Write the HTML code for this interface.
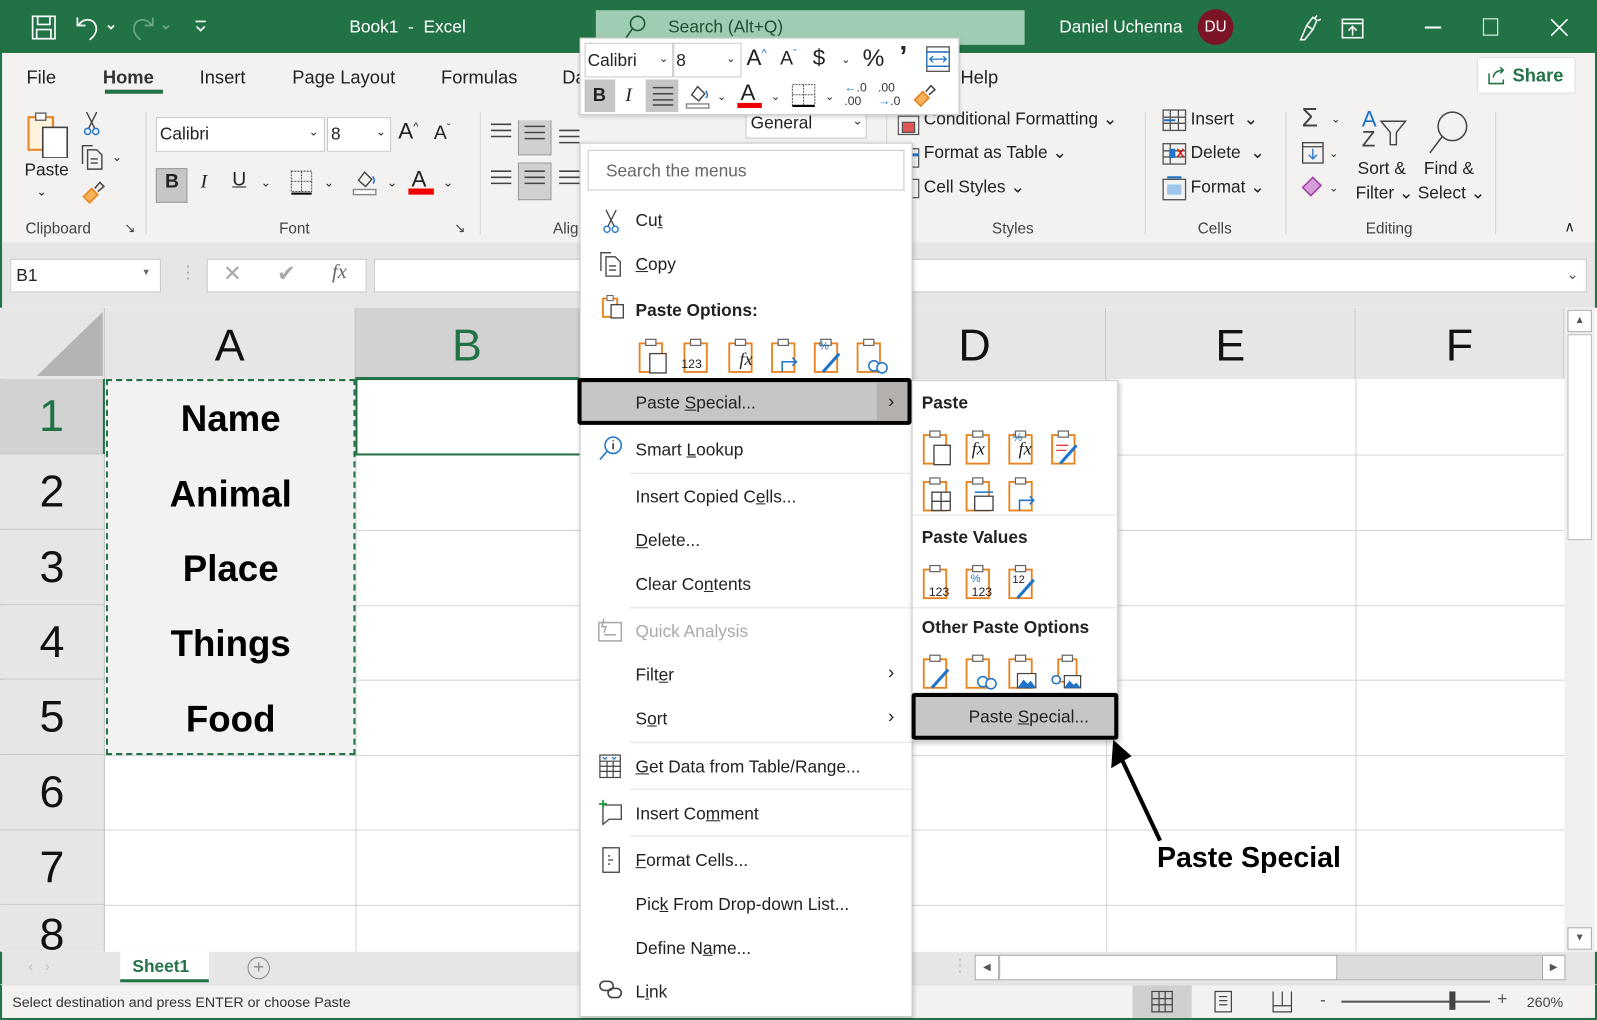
<!DOCTYPE html>
<html><head><meta charset="utf-8"><style>
*{margin:0;padding:0;box-sizing:border-box}
html,body{width:1597px;height:1020px;overflow:hidden;background:#fff}
#w{position:absolute;left:0;top:0;width:1568px;height:1001px;transform:scale(1.01850,1.01898);transform-origin:0 0;font-family:"Liberation Sans",sans-serif;color:#222}
.a{position:absolute}
.t{position:absolute;white-space:nowrap}
.tb{background:#217346}
.g{color:#444}
.rh{position:absolute;left:0;width:103px;background:#e6e6e6;border-bottom:1px solid #c6c6c6;border-right:1px solid #c6c6c6;font-size:44px;text-align:center;line-height:74px;color:#111}
.ch{position:absolute;top:302px;height:70px;background:#e6e6e6;border-right:1px solid #c6c6c6;font-size:44px;text-align:center;line-height:76px;color:#111}
.hl{position:absolute;left:103px;width:1433px;height:1px;background:#d4d4d4}
.vl{position:absolute;top:372px;width:1px;height:562px;background:#d4d4d4}
.cell{position:absolute;left:104px;width:245px;font-weight:bold;font-size:36px;text-align:center;color:#000}
.mi{position:absolute;left:624px;font-size:17px;color:#222;white-space:nowrap}
.sep{position:absolute;left:618px;width:276px;height:1px;background:#e1e1e1}
.u{text-decoration:underline}
.rl{position:absolute;top:216px;font-size:15px;color:#444;white-space:nowrap}
.vs{position:absolute;top:110px;width:1px;height:120px;background:#d4d4d4}
.rt{position:absolute;font-size:17px;color:#222;white-space:nowrap}
</style></head><body><div id="w">

<!-- title bar -->
<div class="a tb" style="left:0;top:0;width:1568px;height:52px"></div>
<svg class="a" style="left:30px;top:14px" width="26" height="26" viewBox="0 0 26 26" fill="none" stroke="#fff" stroke-width="1.6"><rect x="2" y="2" width="22" height="22"/><rect x="7" y="2" width="12" height="8"/><rect x="6" y="15" width="14" height="9"/></svg>
<svg class="a" style="left:72px;top:13px" width="48" height="28" viewBox="0 0 48 28" fill="none" stroke="#fff" stroke-width="1.7"><path d="M4 4v8h8M5 12c4-7 14-8 17 0c2 6-2 11-6 14"/><path d="M34 12l3 3 3-3"/></svg>
<svg class="a" style="left:128px;top:13px" width="48" height="28" viewBox="0 0 48 28" fill="none" stroke="#6aa882" stroke-width="1.7"><path d="M22 4v8h-8M21 12c-4-7-14-8-17 0c-2 6 2 11 6 14"/><path d="M32 12l3 3 3-3"/></svg>
<svg class="a" style="left:190px;top:18px" width="14" height="16" viewBox="0 0 14 16" fill="none" stroke="#fff" stroke-width="1.6"><path d="M2 3h10M3 8l4 4 4-4"/></svg>
<div class="t" style="left:343px;top:17px;font-size:17px;color:#fff">Book1&nbsp; - &nbsp;Excel</div>
<div class="a" style="left:585px;top:10px;width:421px;height:34px;background:#9fcdb3"></div>
<svg class="a" style="left:612px;top:14px" width="24" height="26" viewBox="0 0 24 26" fill="none" stroke="#1e5a38" stroke-width="1.6"><circle cx="14" cy="9" r="7"/><path d="M9 14L2 24"/></svg>
<div class="t" style="left:656px;top:17px;font-size:17px;color:#1e4d33">Search (Alt+Q)</div>
<div class="t" style="left:1040px;top:17px;font-size:17px;color:#fff">Daniel Uchenna</div>
<div class="a" style="left:1176px;top:9px;width:35px;height:35px;border-radius:50%;background:#7b1424;color:#fff;font-size:15px;text-align:center;line-height:35px">DU</div>
<svg class="a" style="left:1273px;top:13px" width="26" height="28" viewBox="0 0 26 28" fill="none" stroke="#fff" stroke-width="1.5"><path d="M4 26l6-14 6 4-8 10zM10 12l6-8 4 3-4 9M20 2l-2 3M24 6l-3 1"/></svg>
<svg class="a" style="left:1316px;top:17px" width="24" height="22" viewBox="0 0 24 22" fill="none" stroke="#fff" stroke-width="1.5"><rect x="2" y="2" width="20" height="18"/><path d="M2 6h20M12 18v-9M8 13l4-4 4 4"/></svg>
<div class="a" style="left:1399px;top:26px;width:16px;height:2px;background:#fff"></div>
<div class="a" style="left:1456px;top:18px;width:15px;height:17px;border:1.6px solid #fff"></div>
<svg class="a" style="left:1522px;top:18px" width="18" height="18" viewBox="0 0 18 18" stroke="#fff" stroke-width="1.6"><path d="M1 1l16 16M17 1L1 17"/></svg>

<!-- ribbon -->
<div class="a" style="left:0;top:52px;width:1568px;height:186px;background:#f3f2f1;border-left:2px solid #217346;border-right:2px solid #217346"></div>
<div class="rt" style="left:26px;top:66px;font-size:18px">File</div>
<div class="rt" style="left:101px;top:66px;font-size:18px;font-weight:bold;color:#333">Home</div>
<div class="a" style="left:103px;top:88px;width:57px;height:4px;background:#217346"></div>
<div class="rt" style="left:196px;top:66px;font-size:18px">Insert</div>
<div class="rt" style="left:287px;top:66px;font-size:18px">Page Layout</div>
<div class="rt" style="left:433px;top:66px;font-size:18px">Formulas</div>
<div class="rt" style="left:552px;top:66px;font-size:18px">Da</div>
<div class="rt" style="left:943px;top:66px;font-size:18px">Help</div>
<div class="a" style="left:1450px;top:56px;width:97px;height:36px;background:#fff;border:1px solid #ddd;border-radius:3px"></div>
<svg class="a" style="left:1460px;top:64px" width="20" height="20" viewBox="0 0 20 20" fill="none" stroke="#217346" stroke-width="1.5"><path d="M2 8v10h14v-4M6 12c1-5 5-7 10-7M13 2l3 3-3 3"/></svg>
<div class="rt" style="left:1485px;top:64px;font-size:18px;font-weight:bold;color:#217346">Share</div>

<!-- clipboard group -->
<svg class="a" style="left:26px;top:107px" width="44" height="48" viewBox="0 0 44 48" fill="none"><rect x="2" y="8" width="24" height="32" fill="#fff3dd" stroke="#e8821e" stroke-width="2"/><rect x="9" y="4" width="10" height="7" fill="#fff" stroke="#666" stroke-width="1.4"/><rect x="16" y="18" width="24" height="30" fill="#fff" stroke="#444" stroke-width="1.6"/></svg>
<div class="rt" style="left:24px;top:157px">Paste</div>
<div class="rt" style="left:36px;top:181px;font-size:12px">&#x2304;</div>
<svg class="a" style="left:80px;top:108px" width="20" height="26" viewBox="0 0 20 26" fill="none" stroke="#444" stroke-width="1.4"><path d="M5 2l8 16M15 2L7 18"/><circle cx="6" cy="21" r="3" stroke="#1f74c9"/><circle cx="14" cy="21" r="3" stroke="#1f74c9"/></svg>
<svg class="a" style="left:78px;top:141px" width="26" height="26" viewBox="0 0 26 26" fill="none" stroke="#444" stroke-width="1.4"><path d="M3 20V2h10"/><path d="M8 6h9l5 5v14H8z"/><path d="M11 15h7M11 19h7"/></svg>
<div class="rt" style="left:110px;top:147px;font-size:12px">&#x2304;</div>
<svg class="a" style="left:78px;top:175px" width="28" height="28" viewBox="0 0 28 28" fill="none"><path d="M4 18l8-8 6 6-8 8z" fill="#f6b35a" stroke="#e8821e" stroke-width="1.6"/><path d="M15 10l5-6 4 4-6 5" stroke="#444" stroke-width="1.5"/></svg>
<div class="rl" style="left:25px">Clipboard</div>
<div class="rl" style="left:122px;font-size:13px">&#x2198;</div>
<div class="vs" style="left:143px"></div>

<!-- font group -->
<div class="a" style="left:153px;top:115px;width:166px;height:34px;background:#fff;border:1px solid #c8c8c8"></div>
<div class="rt" style="left:157px;top:122px">Calibri</div>
<div class="rt" style="left:303px;top:122px;font-size:12px">&#x2304;</div>
<div class="a" style="left:321px;top:115px;width:63px;height:34px;background:#fff;border:1px solid #c8c8c8"></div>
<div class="rt" style="left:325px;top:122px">8</div>
<div class="rt" style="left:369px;top:122px;font-size:12px">&#x2304;</div>
<div class="rt" style="left:391px;top:116px;font-size:22px">A<sup style="font-size:11px">^</sup></div>
<div class="rt" style="left:426px;top:120px;font-size:19px">A<sup style="font-size:11px">&#x2c7;</sup></div>
<div class="a" style="left:153px;top:165px;width:31px;height:34px;background:#c8c6c4;border:1px solid #999"></div>
<div class="rt" style="left:162px;top:168px;font-size:19px;font-weight:bold">B</div>
<div class="rt" style="left:197px;top:168px;font-size:19px;font-style:italic;font-family:'Liberation Serif',serif">I</div>
<div class="rt" style="left:228px;top:166px;font-size:19px;text-decoration:underline">U</div>
<div class="rt" style="left:256px;top:172px;font-size:12px">&#x2304;</div>
<svg class="a" style="left:284px;top:166px" width="24" height="26" viewBox="0 0 24 26" fill="none" stroke="#555" stroke-width="1" stroke-dasharray="2 1"><rect x="2" y="2" width="20" height="20"/><path d="M12 2v20M2 12h20"/><path d="M2 24h20" stroke="#000" stroke-width="2" stroke-dasharray="0"/></svg>
<div class="rt" style="left:318px;top:172px;font-size:12px">&#x2304;</div>
<svg class="a" style="left:346px;top:163px" width="26" height="30" viewBox="0 0 26 30" fill="none" stroke="#444" stroke-width="1.4"><path d="M6 14l6-8 7 7-6 7z"/><path d="M20 10c2 3 2 6 0 7" stroke="#1f74c9"/><rect x="1" y="23" width="22" height="5" fill="#fff" stroke="#888"/></svg>
<div class="rt" style="left:380px;top:172px;font-size:12px">&#x2304;</div>
<div class="rt" style="left:404px;top:163px;font-size:22px">A</div>
<div class="a" style="left:401px;top:185px;width:25px;height:6px;background:#e00"></div>
<div class="rt" style="left:435px;top:172px;font-size:12px">&#x2304;</div>
<div class="rl" style="left:274px">Font</div>
<div class="rl" style="left:446px;font-size:13px">&#x2198;</div>
<div class="vs" style="left:471px"></div>

<!-- alignment partial -->
<svg class="a" style="left:479px;top:118px" width="90" height="80" viewBox="0 0 90 80" fill="none" stroke="#444" stroke-width="1.5"><path d="M3 4h20M3 10h20M3 16h20"/><rect x="30" y="-2" width="32" height="36" fill="#d2d0ce" stroke="#999" stroke-width="1"/><path d="M36 6h20M36 12h20M36 18h20"/><path d="M70 10h20M70 16h20M70 22h20"/><path d="M3 50h20M3 56h20M3 62h20"/><rect x="30" y="42" width="32" height="36" fill="#d2d0ce" stroke="#999" stroke-width="1"/><path d="M36 50h20M36 56h20M36 62h20"/><path d="M70 50h20M70 56h20M70 62h20"/></svg>
<div class="rl" style="left:543px">Alig</div>

<!-- styles / cells / editing -->
<div class="a" style="left:732px;top:108px;width:119px;height:28px;background:#fff;border:1px solid #c8c8c8"></div>
<div class="rt" style="left:737px;top:111px">General</div>
<div class="rt" style="left:837px;top:111px;font-size:12px">&#x2304;</div>
<div class="vs" style="left:870px"></div>
<svg class="a" style="left:880px;top:108px" width="24" height="90" viewBox="0 0 24 90" fill="none" stroke="#555" stroke-width="1.2"><rect x="2" y="6" width="20" height="18"/><rect x="6" y="12" width="12" height="10" fill="#e05555"/><rect x="2" y="38" width="20" height="18"/><path d="M2 44h20" stroke="#1f74c9" stroke-width="3"/><rect x="2" y="68" width="20" height="18"/></svg>
<div class="rt" style="left:907px;top:107px">Conditional Formatting &#x2304;</div>
<div class="rt" style="left:907px;top:140px">Format as Table &#x2304;</div>
<div class="rt" style="left:907px;top:174px">Cell Styles &#x2304;</div>
<div class="rl" style="left:974px">Styles</div>
<div class="vs" style="left:1124px"></div>
<svg class="a" style="left:1140px;top:106px" width="26" height="92" viewBox="0 0 26 92" fill="none" stroke="#555" stroke-width="1.3"><rect x="2" y="2" width="22" height="20"/><path d="M2 9h22M2 15h22M9 2v20M17 2v20"/><path d="M14 12H3" stroke="#1f74c9" stroke-width="2"/><rect x="2" y="35" width="22" height="20"/><path d="M2 42h22M2 48h22M9 35v20"/><rect x="8" y="40" width="6" height="9" fill="#1f74c9" stroke="none"/><path d="M16 40l6 8M22 40l-6 8" stroke="#e00"/><rect x="2" y="70" width="22" height="20"/><rect x="6" y="75" width="14" height="10" fill="#9cc6ec" stroke="none"/><path d="M6 68h14" stroke="#1f74c9" stroke-width="2"/></svg>
<div class="rt" style="left:1169px;top:107px">Insert &nbsp;&#x2304;</div>
<div class="rt" style="left:1169px;top:140px">Delete &nbsp;&#x2304;</div>
<div class="rt" style="left:1169px;top:174px">Format &#x2304;</div>
<div class="rl" style="left:1176px">Cells</div>
<div class="vs" style="left:1262px"></div>
<div class="rt" style="left:1278px;top:100px;font-size:26px;color:#444">&Sigma;</div>
<div class="rt" style="left:1307px;top:110px;font-size:11px">&#x2304;</div>
<svg class="a" style="left:1277px;top:138px" width="24" height="24" viewBox="0 0 24 24" fill="none" stroke="#444" stroke-width="1.3"><rect x="2" y="2" width="20" height="20"/><path d="M2 6h20" /><path d="M12 8v10M8 14l4 4 4-4" stroke="#1f74c9"/></svg>
<div class="rt" style="left:1305px;top:144px;font-size:11px">&#x2304;</div>
<svg class="a" style="left:1277px;top:170px" width="24" height="24" viewBox="0 0 24 24" fill="none"><path d="M2 14l10-10 8 8-10 10z" fill="#d69bd9" stroke="#9c3fa3" stroke-width="1.5"/></svg>
<div class="rt" style="left:1305px;top:178px;font-size:11px">&#x2304;</div>
<div class="rt" style="left:1337px;top:104px;font-size:22px;color:#1f74c9">A</div>
<div class="rt" style="left:1337px;top:124px;font-size:22px;color:#444">Z</div>
<svg class="a" style="left:1354px;top:116px" width="30" height="30" viewBox="0 0 30 30" fill="none" stroke="#444" stroke-width="1.4"><path d="M2 3h24l-9 11v12h-6V14z"/></svg>
<div class="rt" style="left:1333px;top:156px">Sort &amp;</div>
<div class="rt" style="left:1331px;top:180px">Filter &#x2304;</div>
<svg class="a" style="left:1400px;top:104px" width="48" height="48" viewBox="0 0 48 48" fill="none" stroke="#444" stroke-width="1.5"><circle cx="26" cy="20" r="14"/><path d="M16 30L4 46"/></svg>
<div class="rt" style="left:1398px;top:156px">Find &amp;</div>
<div class="rt" style="left:1392px;top:180px">Select &#x2304;</div>
<div class="rl" style="left:1341px">Editing</div>
<div class="vs" style="left:1468px"></div>
<div class="rt" style="left:1536px;top:214px;font-size:14px">&#x2227;</div>

<!-- formula bar area -->
<div class="a" style="left:0;top:238px;width:1568px;height:64px;background:#e6e6e6;border-left:2px solid #217346;border-right:2px solid #217346"></div>
<div class="a" style="left:10px;top:254px;width:148px;height:33px;background:#fff;border:1px solid #c8c8c8"></div>
<div class="rt" style="left:16px;top:261px">B1</div>
<div class="rt" style="left:139px;top:262px;font-size:9px;color:#666">&#9660;</div>
<div class="rt" style="left:176px;top:258px;color:#aaa">&#8942;</div>
<div class="a" style="left:203px;top:254px;width:157px;height:33px;background:#fff;border:1px solid #c8c8c8"></div>
<div class="rt" style="left:219px;top:256px;font-size:22px;color:#aaa">&#x2715;</div>
<div class="rt" style="left:272px;top:256px;font-size:22px;color:#aaa">&#x2714;</div>
<div class="rt" style="left:326px;top:256px;font-size:20px;color:#666;font-style:italic;font-family:'Liberation Serif',serif">fx</div>
<div class="a" style="left:367px;top:254px;width:1191px;height:33px;background:#fff;border:1px solid #c8c8c8"></div>
<div class="rt" style="left:1538px;top:261px;font-size:14px;color:#555">&#x2304;</div>

<!-- grid -->
<div class="a" style="left:0;top:302px;width:1536px;height:632px;background:#fff;border-left:2px solid #217346"></div>
<div class="a" style="left:0;top:302px;width:103px;height:70px;background:#e6e6e6;border-right:1px solid #c6c6c6"></div>
<svg class="a" style="left:36px;top:306px" width="65" height="63" viewBox="0 0 65 63"><path d="M65 0V63H0z" fill="#b4b4b4"/></svg>
<div class="ch" style="left:103px;width:246px">A</div>
<div class="ch" style="left:349px;width:220px;background:#d2d2d2;color:#217346;border-bottom:2px solid #217346">B</div>
<div class="ch" style="left:895px;width:191px;background:#e6e6e6"><span style="position:absolute;left:46px">D</span></div>
<div class="ch" style="left:1086px;width:245px">E</div>
<div class="ch" style="left:1331px;width:205px">F</div>

<div class="rh" style="top:372px;height:74px;background:#d2d2d2;color:#217346;border-right:2px solid #217346">1</div>
<div class="rh" style="top:446px;height:74px">2</div>
<div class="rh" style="top:520px;height:74px">3</div>
<div class="rh" style="top:594px;height:73px">4</div>
<div class="rh" style="top:667px;height:74px">5</div>
<div class="rh" style="top:741px;height:74px">6</div>
<div class="rh" style="top:815px;height:73px">7</div>
<div class="rh" style="top:888px;height:46px;line-height:60px;overflow:hidden;border-bottom:none">8</div>

<div class="hl" style="top:446px"></div><div class="hl" style="top:520px"></div><div class="hl" style="top:594px"></div><div class="hl" style="top:667px"></div><div class="hl" style="top:741px"></div><div class="hl" style="top:814px"></div><div class="hl" style="top:888px"></div>
<div class="vl" style="left:349px"></div><div class="vl" style="left:1086px"></div><div class="vl" style="left:1331px"></div>
<div class="a" style="left:104px;top:372px;width:245px;height:369px;background:#f2f2f2;border:2px dashed #217346"></div>
<div class="cell" style="top:390px">Name</div>
<div class="cell" style="top:464px">Animal</div>
<div class="cell" style="top:537px">Place</div>
<div class="cell" style="top:611px">Things</div>
<div class="cell" style="top:685px">Food</div>
<div class="a" style="left:349px;top:371px;width:222px;height:76px;border:2px solid #217346;border-right:none"></div>

<!-- scrollbar -->
<div class="a" style="left:1536px;top:302px;width:30px;height:632px;background:#f0f0f0"></div>
<div class="a" style="left:1539px;top:304px;width:24px;height:22px;background:#fff;border:1px solid #aaa;font-size:10px;text-align:center;line-height:20px;color:#555">&#9650;</div>
<div class="a" style="left:1539px;top:328px;width:24px;height:202px;background:#fff;border:1px solid #bbb"></div>
<div class="a" style="left:1539px;top:910px;width:24px;height:22px;background:#fff;border:1px solid #aaa;font-size:10px;text-align:center;line-height:20px;color:#555">&#9660;</div>

<!-- sheet tabs -->
<div class="a" style="left:0;top:934px;width:1568px;height:32px;background:#e6e6e6;border-left:2px solid #217346;border-right:2px solid #217346"></div>
<div class="rt" style="left:28px;top:940px;color:#bbb;font-size:14px">&#x2039; &nbsp; &#x203A;</div>
<div class="a" style="left:118px;top:934px;width:87px;height:30px;background:#fff;border-bottom:3px solid #217346"></div>
<div class="rt" style="left:130px;top:939px;font-weight:bold;color:#217346">Sheet1</div>
<div class="a" style="left:243px;top:939px;width:22px;height:22px;border:1.5px solid #888;border-radius:50%;text-align:center;line-height:18px;color:#888;font-size:18px">+</div>
<div class="rt" style="left:934px;top:938px;color:#bbb">&#8942;</div>
<div class="a" style="left:957px;top:937px;width:580px;height:25px;background:#dcdcdc;border:1px solid #bbb"></div>
<div class="a" style="left:957px;top:937px;width:24px;height:25px;background:#fff;border:1px solid #aaa;font-size:10px;text-align:center;line-height:23px;color:#555">&#9664;</div>
<div class="a" style="left:981px;top:937px;width:332px;height:25px;background:#fff;border:1px solid #aaa"></div>
<div class="a" style="left:1514px;top:937px;width:23px;height:25px;background:#fff;border:1px solid #aaa;font-size:10px;text-align:center;line-height:23px;color:#555">&#9654;</div>

<!-- status bar -->
<div class="a" style="left:0;top:966px;width:1568px;height:35px;background:#f3f2f1;border:2px solid #217346;border-top:1px solid #ddd"></div>
<div class="rt" style="left:12px;top:975px;font-size:14px;color:#333">Select destination and press ENTER or choose Paste</div>
<div class="a" style="left:1112px;top:967px;width:58px;height:32px;background:#d2d0ce"></div>
<svg class="a" style="left:1130px;top:972px" width="22" height="22" viewBox="0 0 22 22" fill="none" stroke="#444" stroke-width="1.2"><rect x="1" y="1" width="20" height="20"/><path d="M1 8h20M1 14h20M8 1v20M14 1v20"/></svg>
<svg class="a" style="left:1190px;top:972px" width="22" height="22" viewBox="0 0 22 22" fill="none" stroke="#444" stroke-width="1.2"><rect x="3" y="1" width="16" height="20"/><path d="M7 6h8M7 10h8M7 14h8"/></svg>
<svg class="a" style="left:1248px;top:972px" width="22" height="22" viewBox="0 0 22 22" fill="none" stroke="#444" stroke-width="1.2"><path d="M2 1v20h18V1M11 1v14M2 15h18"/></svg>
<div class="rt" style="left:1296px;top:972px;color:#555">-</div>
<div class="a" style="left:1317px;top:982px;width:146px;height:2px;background:#555"></div>
<div class="a" style="left:1423px;top:973px;width:6px;height:18px;background:#444"></div>
<div class="rt" style="left:1470px;top:971px;color:#555">+</div>
<div class="rt" style="left:1499px;top:975px;font-size:14px;color:#444">260%</div>

<!-- mini toolbar -->
<div class="a" style="left:569px;top:37px;width:373px;height:76px;background:#fff;border:1px solid #c8c8c8;box-shadow:0 2px 4px rgba(0,0,0,.2)"></div>
<div class="a" style="left:574px;top:42px;width:87px;height:34px;border:1px solid #c8c8c8"></div>
<div class="rt" style="left:577px;top:50px">Calibri</div>
<div class="rt" style="left:647px;top:51px;font-size:11px">&#x2304;</div>
<div class="a" style="left:661px;top:42px;width:67px;height:34px;border:1px solid #c8c8c8"></div>
<div class="rt" style="left:664px;top:50px">8</div>
<div class="rt" style="left:713px;top:51px;font-size:11px">&#x2304;</div>
<div class="rt" style="left:733px;top:44px;font-size:22px">A<sup style="font-size:11px;color:#1f74c9">^</sup></div>
<div class="rt" style="left:766px;top:47px;font-size:19px">A<sup style="font-size:11px;color:#1f74c9">&#x2c7;</sup></div>
<div class="rt" style="left:798px;top:44px;font-size:22px">$</div>
<div class="rt" style="left:826px;top:52px;font-size:11px">&#x2304;</div>
<div class="rt" style="left:847px;top:44px;font-size:24px">%</div>
<div class="rt" style="left:883px;top:40px;font-size:28px;font-weight:bold">&#x2019;</div>
<svg class="a" style="left:909px;top:45px" width="24" height="26" viewBox="0 0 24 26" fill="none" stroke="#555" stroke-width="1.3"><rect x="1" y="1" width="22" height="24"/><path d="M1 6h22M1 20h22"/><path d="M4 13h16M7 10l-3 3 3 3M17 10l3 3-3 3" stroke="#1f74c9"/><rect x="1" y="6" width="22" height="14" stroke="#1f74c9"/></svg>
<div class="a" style="left:574px;top:78px;width:30px;height:32px;background:#c8c6c4"></div>
<div class="rt" style="left:582px;top:83px;font-size:18px;font-weight:bold">B</div>
<div class="rt" style="left:614px;top:83px;font-size:19px;font-style:italic;font-family:'Liberation Serif',serif">I</div>
<div class="a" style="left:634px;top:78px;width:32px;height:32px;background:#c8c6c4"></div>
<svg class="a" style="left:640px;top:84px" width="22" height="20" viewBox="0 0 22 20" stroke="#444" stroke-width="1.5"><path d="M1 2h20M1 8h20M1 14h20M1 19h20"/></svg>
<svg class="a" style="left:673px;top:79px" width="26" height="30" viewBox="0 0 26 30" fill="none" stroke="#444" stroke-width="1.4"><path d="M6 14l6-8 7 7-6 7z"/><path d="M20 10c2 3 2 6 0 7" stroke="#1f74c9"/><rect x="1" y="23" width="22" height="4" stroke="#888"/></svg>
<div class="rt" style="left:704px;top:88px;font-size:11px">&#x2304;</div>
<div class="rt" style="left:727px;top:78px;font-size:22px">A</div>
<div class="a" style="left:724px;top:101px;width:24px;height:5px;background:#e00"></div>
<div class="rt" style="left:757px;top:88px;font-size:11px">&#x2304;</div>
<svg class="a" style="left:777px;top:82px" width="24" height="24" viewBox="0 0 24 24" fill="none" stroke="#555" stroke-width="1" stroke-dasharray="2 1"><rect x="1" y="1" width="22" height="20"/><path d="M12 1v20M1 11h22"/><path d="M1 22h22" stroke="#000" stroke-width="2" stroke-dasharray="0"/></svg>
<div class="rt" style="left:810px;top:88px;font-size:11px">&#x2304;</div>
<div class="rt" style="left:829px;top:80px;font-size:12px;line-height:13px;color:#1f74c9">&larr;<span style="color:#333">.0</span><br><span style="color:#333">.00</span></div>
<div class="rt" style="left:862px;top:80px;font-size:12px;line-height:13px;color:#333">.00<br><span style="color:#1f74c9">&rarr;</span>.0</div>
<svg class="a" style="left:894px;top:80px" width="28" height="28" viewBox="0 0 28 28" fill="none"><path d="M4 18l8-8 6 6-8 8z" fill="#f6b35a" stroke="#e8821e" stroke-width="1.6"/><path d="M15 10l5-6 4 4-6 5" stroke="#444" stroke-width="1.5"/></svg>

<!-- context menu -->
<div class="a" style="left:569px;top:140px;width:327px;height:858px;background:#fff;border:1px solid #c8c8c8;box-shadow:1px 2px 5px rgba(0,0,0,.25)"></div>
<div class="a" style="left:577px;top:147px;width:311px;height:40px;border:1px solid #c8c8c8"></div>
<div class="rt" style="left:595px;top:158px;color:#666">Search the menus</div>
<svg class="a" style="left:590px;top:204px" width="20" height="26" viewBox="0 0 20 26" fill="none" stroke="#444" stroke-width="1.3"><path d="M5 2l8 16M15 2L7 18"/><circle cx="6" cy="21" r="3" stroke="#1f74c9"/><circle cx="14" cy="21" r="3" stroke="#1f74c9"/></svg>
<div class="mi" style="top:207px">Cu<span class="u">t</span></div>
<svg class="a" style="left:587px;top:246px" width="26" height="26" viewBox="0 0 26 26" fill="none" stroke="#444" stroke-width="1.3"><path d="M3 20V2h10"/><path d="M8 6h9l5 5v14H8z"/><path d="M11 15h7M11 19h7"/></svg>
<div class="mi" style="top:250px"><span class="u">C</span>opy</div>
<svg class="a" style="left:590px;top:289px" width="24" height="24" viewBox="0 0 24 24" fill="none"><rect x="2" y="4" width="14" height="18" stroke="#e8821e" stroke-width="1.8"/><rect x="6" y="1" width="6" height="5" fill="#fff" stroke="#666"/><rect x="10" y="10" width="12" height="13" fill="#fff" stroke="#444" stroke-width="1.3"/></svg>
<div class="mi" style="top:295px;font-weight:bold">Paste Options:</div>
<!-- paste option icons -->
<svg class="a" style="left:626px;top:331px" width="250" height="36" viewBox="0 0 250 36" fill="none" stroke-width="1.8">
<g><rect x="2" y="6" width="22" height="28" stroke="#e8821e"/><rect x="8" y="2" width="10" height="6" fill="#fff" stroke="#666" stroke-width="1.2"/></g>
<rect x="12" y="16" width="16" height="19" fill="#fff" stroke="#444" stroke-width="1.3"/>
<g transform="translate(44 0)"><rect x="2" y="6" width="22" height="28" stroke="#e8821e"/><rect x="8" y="2" width="10" height="6" fill="#fff" stroke="#666" stroke-width="1.2"/></g>
<g transform="translate(88 0)"><rect x="2" y="6" width="22" height="28" stroke="#e8821e"/><rect x="8" y="2" width="10" height="6" fill="#fff" stroke="#666" stroke-width="1.2"/></g>
<g transform="translate(130 0)"><rect x="2" y="6" width="22" height="28" stroke="#e8821e"/><rect x="8" y="2" width="10" height="6" fill="#fff" stroke="#666" stroke-width="1.2"/><path d="M12 34v-10h14M22 20l4 4-4 4" stroke="#1f74c9" stroke-width="1.5"/></g>
<g transform="translate(172 0)"><rect x="2" y="6" width="22" height="28" stroke="#e8821e"/><rect x="8" y="2" width="10" height="6" fill="#fff" stroke="#666" stroke-width="1.2"/><path d="M10 34l16-18" stroke="#1f74c9" stroke-width="3"/></g>
<g transform="translate(214 0)"><rect x="2" y="6" width="22" height="28" stroke="#e8821e"/><rect x="8" y="2" width="10" height="6" fill="#fff" stroke="#666" stroke-width="1.2"/><circle cx="18" cy="28" r="5" fill="#fff" stroke="#1f74c9" stroke-width="1.5"/><circle cx="26" cy="30" r="5" fill="#fff" stroke="#1f74c9" stroke-width="1.5"/></g>
</svg>
<div class="rt" style="left:669px;top:350px;font-size:12px">123</div>
<div class="rt" style="left:726px;top:342px;font-size:18px;font-style:italic;font-family:'Liberation Serif',serif">fx</div>
<div class="rt" style="left:804px;top:334px;font-size:11px;color:#1f74c9">%</div>

<div class="a" style="left:567px;top:371px;width:328px;height:46px;border:4px solid #000;border-radius:3px;background:#c8c6c4"></div>
<div class="a" style="left:861px;top:375px;width:30px;height:38px;background:#b3b0ad"></div>
<div class="mi" style="top:386px">Paste <span class="u">S</span>pecial...</div>
<div class="rt" style="left:872px;top:384px;font-size:18px">&#x203A;</div>
<svg class="a" style="left:587px;top:427px" width="26" height="28" viewBox="0 0 26 28" fill="none" stroke="#1f74c9" stroke-width="1.5"><circle cx="15" cy="10" r="8"/><path d="M9 16L2 24"/><path d="M15 8v6M15 5v1" stroke="#333"/></svg>
<div class="mi" style="top:432px">Smart <span class="u">L</span>ookup</div>
<div class="sep" style="top:464px"></div>
<div class="mi" style="top:478px">Insert Copied C<span class="u">e</span>lls...</div>
<div class="mi" style="top:521px"><span class="u">D</span>elete...</div>
<div class="mi" style="top:564px">Clear Co<span class="u">n</span>tents</div>
<div class="sep" style="top:596px"></div>
<svg class="a" style="left:587px;top:605px" width="26" height="26" viewBox="0 0 26 26" fill="none" stroke="#aaa" stroke-width="1.5"><rect x="1" y="6" width="22" height="18"/><path d="M6 18h12M6 2l-2 8h4l-2 6"/></svg>
<div class="mi" style="top:610px;color:#aaa">Quick Analysis</div>
<div class="mi" style="top:653px">Filt<span class="u">e</span>r</div>
<div class="rt" style="left:872px;top:650px;font-size:18px">&#x203A;</div>
<div class="mi" style="top:696px">S<span class="u">o</span>rt</div>
<div class="rt" style="left:872px;top:693px;font-size:18px">&#x203A;</div>
<div class="sep" style="top:728px"></div>
<svg class="a" style="left:588px;top:740px" width="22" height="24" viewBox="0 0 22 24" fill="none" stroke="#444" stroke-width="1.2"><rect x="1" y="1" width="20" height="22"/><path d="M1 7h20M1 12h20M1 17h20M8 7v16M14 7v16"/><path d="M4 3l2 2 2-2M13 3l2 2 2-2" stroke="#1f74c9"/></svg>
<div class="mi" style="top:743px"><span class="u">G</span>et Data from Table/Range...</div>
<div class="sep" style="top:774px"></div>
<svg class="a" style="left:588px;top:784px" width="24" height="26" viewBox="0 0 24 26" fill="none" stroke="#444" stroke-width="1.3"><path d="M4 6h18v14H10l-6 5z"/><path d="M4 1v8M0 5h8" stroke="#2e9a47" stroke-width="1.8"/></svg>
<div class="mi" style="top:789px">Insert Co<span class="u">m</span>ment</div>
<div class="sep" style="top:820px"></div>
<svg class="a" style="left:590px;top:831px" width="20" height="26" viewBox="0 0 20 26" fill="none" stroke="#444" stroke-width="1.3"><rect x="2" y="1" width="16" height="24"/><path d="M7 9h2M7 13h5M7 17h2"/></svg>
<div class="mi" style="top:835px"><span class="u">F</span>ormat Cells...</div>
<div class="mi" style="top:878px">Pic<span class="u">k</span> From Drop-down List...</div>
<div class="mi" style="top:921px">Define N<span class="u">a</span>me...</div>
<svg class="a" style="left:587px;top:960px" width="26" height="22" viewBox="0 0 26 22" fill="none" stroke="#444" stroke-width="1.6"><rect x="2" y="3" width="13" height="9" rx="4.5"/><rect x="10" y="10" width="13" height="9" rx="4.5"/></svg>
<div class="mi" style="top:964px">L<span class="u">i</span>nk</div>

<!-- submenu -->
<div class="a" style="left:895px;top:373px;width:203px;height:354px;background:#fff;border:1px solid #c8c8c8;box-shadow:1px 2px 5px rgba(0,0,0,.25)"></div>
<div class="rt" style="left:905px;top:386px;font-weight:bold">Paste</div>
<svg class="a" style="left:905px;top:421px" width="170" height="82" viewBox="0 0 170 82" fill="none" stroke-width="1.8">
<g><rect x="2" y="6" width="22" height="28" stroke="#e8821e"/><rect x="8" y="2" width="10" height="6" fill="#fff" stroke="#666" stroke-width="1.2"/><rect x="12" y="16" width="16" height="19" fill="#fff" stroke="#444" stroke-width="1.3"/></g>
<g transform="translate(42 0)"><rect x="2" y="6" width="22" height="28" stroke="#e8821e"/><rect x="8" y="2" width="10" height="6" fill="#fff" stroke="#666" stroke-width="1.2"/></g>
<g transform="translate(84 0)"><rect x="2" y="6" width="22" height="28" stroke="#e8821e"/><rect x="8" y="2" width="10" height="6" fill="#fff" stroke="#666" stroke-width="1.2"/></g>
<g transform="translate(126 0)"><rect x="2" y="6" width="22" height="28" stroke="#e8821e"/><rect x="8" y="2" width="10" height="6" fill="#fff" stroke="#666" stroke-width="1.2"/><path d="M6 16h12M6 21h10" stroke="#e04040" stroke-width="1.3"/><path d="M10 34l16-18" stroke="#1f74c9" stroke-width="3"/></g>
<g transform="translate(0 46)"><rect x="2" y="6" width="22" height="28" stroke="#e8821e"/><rect x="8" y="2" width="10" height="6" fill="#fff" stroke="#666" stroke-width="1.2"/><rect x="10" y="16" width="18" height="18" fill="#fff" stroke="#444" stroke-width="1.3"/><path d="M19 16v18M10 25h18" stroke="#444" stroke-width="1.3"/></g>
<g transform="translate(42 46)"><rect x="2" y="6" width="22" height="28" stroke="#e8821e"/><rect x="8" y="2" width="10" height="6" fill="#fff" stroke="#666" stroke-width="1.2"/><rect x="10" y="20" width="18" height="14" fill="#fff" stroke="#444" stroke-width="1.3"/><path d="M10 16h18" stroke="#1f74c9" stroke-width="1.5"/></g>
<g transform="translate(84 46)"><rect x="2" y="6" width="22" height="28" stroke="#e8821e"/><rect x="8" y="2" width="10" height="6" fill="#fff" stroke="#666" stroke-width="1.2"/><path d="M12 34v-10h14M22 20l4 4-4 4" stroke="#1f74c9" stroke-width="1.5"/></g>
</svg>
<div class="rt" style="left:954px;top:430px;font-size:18px;font-style:italic;font-family:'Liberation Serif',serif">fx</div>
<div class="rt" style="left:994px;top:424px;font-size:11px;color:#1f74c9">%</div>
<div class="rt" style="left:1000px;top:430px;font-size:18px;font-style:italic;font-family:'Liberation Serif',serif">fx</div>
<div class="a" style="left:896px;top:505px;width:201px;height:1px;background:#e1e1e1"></div>
<div class="rt" style="left:905px;top:518px;font-weight:bold">Paste Values</div>
<svg class="a" style="left:905px;top:553px" width="130" height="36" viewBox="0 0 130 36" fill="none" stroke-width="1.8">
<g><rect x="2" y="6" width="22" height="28" stroke="#e8821e"/><rect x="8" y="2" width="10" height="6" fill="#fff" stroke="#666" stroke-width="1.2"/></g>
<g transform="translate(42 0)"><rect x="2" y="6" width="22" height="28" stroke="#e8821e"/><rect x="8" y="2" width="10" height="6" fill="#fff" stroke="#666" stroke-width="1.2"/></g>
<g transform="translate(84 0)"><rect x="2" y="6" width="22" height="28" stroke="#e8821e"/><rect x="8" y="2" width="10" height="6" fill="#fff" stroke="#666" stroke-width="1.2"/><path d="M10 34l16-18" stroke="#1f74c9" stroke-width="3"/></g>
</svg>
<div class="rt" style="left:912px;top:574px;font-size:12px">123</div>
<div class="rt" style="left:953px;top:562px;font-size:11px;color:#1f74c9">%</div>
<div class="rt" style="left:954px;top:574px;font-size:12px">123</div>
<div class="rt" style="left:994px;top:563px;font-size:11px">12</div>
<div class="a" style="left:896px;top:596px;width:201px;height:1px;background:#e1e1e1"></div>
<div class="rt" style="left:905px;top:606px;font-weight:bold">Other Paste Options</div>
<svg class="a" style="left:905px;top:641px" width="170" height="36" viewBox="0 0 170 36" fill="none" stroke-width="1.8">
<g><rect x="2" y="6" width="22" height="28" stroke="#e8821e"/><rect x="8" y="2" width="10" height="6" fill="#fff" stroke="#666" stroke-width="1.2"/><path d="M10 34l16-18" stroke="#1f74c9" stroke-width="3"/></g>
<g transform="translate(42 0)"><rect x="2" y="6" width="22" height="28" stroke="#e8821e"/><rect x="8" y="2" width="10" height="6" fill="#fff" stroke="#666" stroke-width="1.2"/><circle cx="18" cy="28" r="5" fill="#fff" stroke="#1f74c9" stroke-width="1.5"/><circle cx="26" cy="30" r="5" fill="#fff" stroke="#1f74c9" stroke-width="1.5"/></g>
<g transform="translate(84 0)"><rect x="2" y="6" width="22" height="28" stroke="#e8821e"/><rect x="8" y="2" width="10" height="6" fill="#fff" stroke="#666" stroke-width="1.2"/><rect x="10" y="20" width="18" height="14" fill="#fff" stroke="#444" stroke-width="1.2"/><path d="M10 34l6-8 4 4 3-3 5 7z" fill="#1f74c9" stroke="none"/></g>
<g transform="translate(126 0)"><rect x="8" y="6" width="18" height="22" stroke="#e8821e"/><rect x="12" y="2" width="10" height="6" fill="#fff" stroke="#666" stroke-width="1.2"/><circle cx="6" cy="26" r="4" stroke="#1f74c9" stroke-width="1.5" fill="#fff"/><rect x="14" y="22" width="16" height="12" fill="#fff" stroke="#444" stroke-width="1.2"/><path d="M14 34l5-7 4 4 3-2 4 5z" fill="#1f74c9" stroke="none"/></g>
</svg>
<div class="a" style="left:895px;top:680px;width:203px;height:46px;border:4px solid #000;border-radius:3px;background:#c8c6c4"></div>
<div class="rt" style="left:951px;top:694px;font-size:17px">Paste <span class="u">S</span>pecial...</div>

<!-- annotation -->
<svg class="a" style="left:1085px;top:720px" width="70" height="110" viewBox="0 0 70 110"><path d="M54 105L14 20" stroke="#000" stroke-width="4"/><path d="M8 6L6 34L26 22z" fill="#000"/></svg>
<div class="rt" style="left:1136px;top:826px;font-size:28px;font-weight:bold;color:#000">Paste Special</div>

</div></body></html>
